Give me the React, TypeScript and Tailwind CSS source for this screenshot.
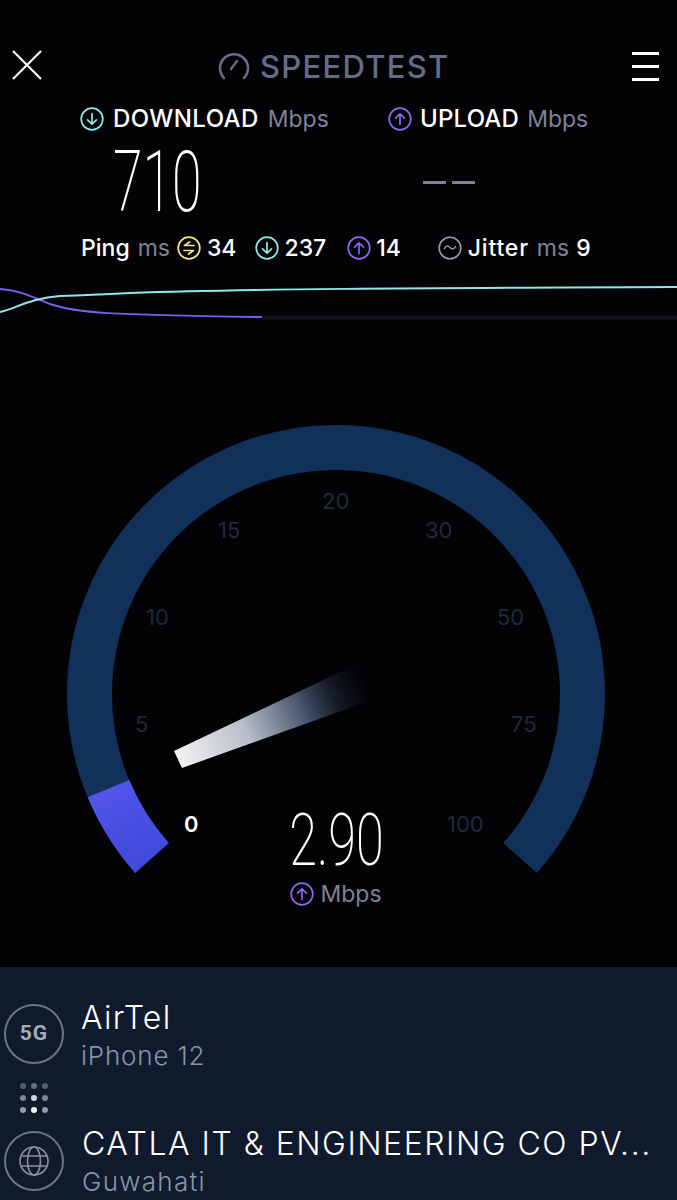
const sans = "font-['Inter','Liberation_Sans',sans-serif]";

const CircleArrow = ({ up, color, size = 24 }: { up?: boolean; color: string; size?: number }) => (
    <svg width={size} height={size} viewBox="0 0 24 24" fill="none" stroke={color} strokeWidth="1.7" strokeLinecap="round" strokeLinejoin="round" className="shrink-0">
        <circle cx="12" cy="12" r="10.8" />
        {up ? <path d="M12 17.5V6.8M7.5 11.2 12 6.8l4.5 4.4" /> : <path d="M12 6.5v10.7M7.5 12.8l4.5 4.4 4.5-4.4" />}
    </svg>
);

const PingIcon = () => (
    <svg width="24" height="24" viewBox="0 0 24 24" fill="none" stroke="#f2e68a" strokeWidth="1.7" strokeLinecap="round" strokeLinejoin="round" className="shrink-0">
        <circle cx="12" cy="12" r="10.8" />
        <path d="M17 9.5H7.5L12.5 6M7 14.5h9.5L11.5 18" />
    </svg>
);

const JitterIcon = () => (
    <svg width="24" height="24" viewBox="0 0 24 24" fill="none" stroke="#9a9fae" strokeWidth="1.5" strokeLinecap="round" className="shrink-0">
        <circle cx="12" cy="12" r="10.8" />
        <path d="M6.5 12.5c1.5-3 3.5-3 5.5-1s4 2 5.5-1" />
    </svg>
);

const Gauge = () => (
    <svg width="677" height="637" viewBox="0 330 677 637" fill="none" className="block">
        <defs>
            <linearGradient id="needle" gradientUnits="userSpaceOnUse" x1="178" y1="760" x2="370" y2="681">
                <stop offset="0" stopColor="#f2f2f2" />
                <stop offset="0.35" stopColor="#b9bfca" />
                <stop offset="0.65" stopColor="#46546c" />
                <stop offset="1" stopColor="#040a14" stopOpacity="0" />
            </linearGradient>
            <linearGradient id="fill" gradientUnits="userSpaceOnUse" x1="110" y1="790" x2="150" y2="870">
                <stop offset="0" stopColor="#5254ea" />
                <stop offset="1" stopColor="#3f47d9" />
            </linearGradient>
        </defs>
        <path d="M152 858A246.5 246.5 0 1 1 520 858" stroke="#11305a" strokeWidth="45" />
        <path d="M152 858A246.5 246.5 0 0 1 108.5 788.7" stroke="url(#fill)" strokeWidth="45" />
        <path d="M174 751 182 768 372 700 357 664Z" fill="url(#needle)" />
    </svg>
);

const labels = [
    { t: '20', c: 'left-[322px] top-[158px]' },
    { t: '15', c: 'left-[218px] top-[187px]' },
    { t: '30', c: 'left-[425px] top-[187px]' },
    { t: '10', c: 'left-[146px] top-[274px]' },
    { t: '50', c: 'left-[497px] top-[274px]' },
    { t: '5', c: 'left-[135px] top-[381px]' },
    { t: '75', c: 'left-[511px] top-[381px]' },
    { t: '100', c: 'left-[447px] top-[481px]' },
];

export default function App() {
    return (
        <div className={`w-[677px] h-[1200px] overflow-hidden bg-[#030305] text-white ${sans}`}>
            <div className="h-[330px]">
                <div className="flex items-center justify-between h-[132px] px-[12px] relative">
                    <svg width="30" height="30" viewBox="0 0 30 30" stroke="#fff" strokeWidth="2.2" className="-translate-y-[1px]">
                        <path d="M1 1 29 29M29 1 1 29" />
                    </svg>
                    <div className="flex items-center gap-[10px] text-[#646c88] ml-[176px] mr-auto">
                        <svg width="32" height="30" viewBox="0 0 32 30" fill="none" stroke="#646c88" strokeWidth="2.6" strokeLinecap="round">
                            <path d="M6 27A14 14 0 1 1 26 27" />
                            <path d="M13 18 19 10" strokeWidth="2.4" />
                        </svg>
                        <span className="text-[31px] font-medium tracking-[1.3px] leading-none">SPEEDTEST</span>
                    </div>
                    <div className="flex flex-col gap-[10px] w-[27px] mr-[6px]">
                        <div className="h-[3px] bg-white" />
                        <div className="h-[3px] bg-white" />
                        <div className="h-[3px] bg-white" />
                    </div>
                </div>
                <div className="-mt-[25px] flex items-center h-[24px] text-[24px] font-medium leading-none">
                    <div className="ml-[80px] w-[308px] flex items-center gap-[9px]">
                        <CircleArrow color="#8fe8e8" />
                        <span className="tracking-[0.4px]">DOWNLOAD</span>
                        <span className="text-[#7d8299] font-normal text-[23px]">Mbps</span>
                    </div>
                    <div className="flex items-center gap-[8px]">
                        <CircleArrow up color="#8b66ee" />
                        <span className="tracking-[0.2px]">UPLOAD</span>
                        <span className="text-[#7d8299] font-normal text-[23px]">Mbps</span>
                    </div>
                </div>
                <div className="flex items-center h-[70px] mt-[16px]">
                    <span className="ml-[113px] w-[310px] text-[85px] leading-none font-['Roboto',sans-serif] font-extralight scale-x-[.63] origin-left">710</span>
                    <div className="flex gap-[6px] mt-[1px]">
                        <div className="w-[23px] h-[3px] bg-[#7f8298]" />
                        <div className="w-[23px] h-[3px] bg-[#7f8298]" />
                    </div>
                </div>
                <div className="flex items-center h-[24px] mt-[19px] text-[23px] font-medium leading-none">
                    <span className="ml-[81px]">Ping</span>
                    <span className="ml-[8px] text-[#7d8299] font-normal">ms</span>
                    <span className="ml-[7px]"><PingIcon /></span>
                    <span className="ml-[6px]">34</span>
                    <span className="ml-[19px]"><CircleArrow color="#8fe8e8" /></span>
                    <span className="ml-[5px]">237</span>
                    <span className="ml-[21px]"><CircleArrow up color="#8b66ee" /></span>
                    <span className="ml-[5px]">14</span>
                    <span className="ml-[37px]"><JitterIcon /></span>
                    <span className="ml-[6px] tracking-[0.8px]">Jitter</span>
                    <span className="ml-[8px] text-[#7d8299] font-normal">ms</span>
                    <span className="ml-[7px]">9</span>
                </div>
                <svg width="677" height="60" viewBox="0 270 677 60" fill="none" className="block mt-[10px]">
                    <path d="M262 317.5H677" stroke="#111317" strokeWidth="4" />
                    <path d="M0 289C20 290 32 297 50 304C75 313 110 315 262 317" stroke="#7b5de8" strokeWidth="2" />
                    <path d="M0 312C15 309 30 298 60 296C90 295 110 294 130 293C250 289 400 288 677 287" stroke="#8fe8e8" strokeWidth="2" />
                </svg>
            </div>

            <div className="relative h-[637px]">
                <Gauge />
                {labels.map((l) => (
                    <span key={l.t} className={`absolute ${l.c} text-[22px] leading-[26px] text-[#1e2a3b]`}>{l.t}</span>
                ))}
                <span className="absolute left-[184px] top-[481px] text-[22px] leading-[26px] font-semibold text-white">0</span>
                <div className="absolute left-[270px] top-[481px] w-[132px] flex flex-col items-center">
                    <span className="text-[72px] leading-[60px] font-['Roboto',sans-serif] font-extralight scale-x-[.7]">2.90</span>
                    <div className="flex items-center gap-[6px] mt-[11px] text-[23px] leading-none text-[#7d8299]">
                        <CircleArrow up color="#8b66ee" />
                        <span>Mbps</span>
                    </div>
                </div>
            </div>

            <div className="h-[233px] bg-[#0f1a2d] pl-[4px]">
                <div className="flex items-start gap-[17px] pt-[32px]">
                    <div className="w-[60px] h-[60px] mt-[5px] rounded-full border-2 border-[#6e7485] flex items-center justify-center font-['Roboto',sans-serif] text-[21px] font-bold text-[#a6abb8] tracking-[1px]">5G</div>
                    <div className="flex flex-col">
                        <span className="text-[32px] leading-[38px] font-light tracking-[1.3px]">AirTel</span>
                        <span className="text-[26px] leading-[38px] font-light tracking-[0.8px] text-[#8a94a8]">iPhone 12</span>
                    </div>
                </div>
                <div className="ml-[16px] mt-[8px] grid grid-cols-3 w-[28px] gap-y-[6px] gap-x-[5px]">
                    {['#555d72', '#666e82', '#555d72', '#7d8496', '#d0d3dc', '#7d8496', '#9599a8', '#f4f4f6', '#9599a8'].map((c, i) => (
                        <div key={i} className="w-[6px] h-[6px] rounded-full" style={{ backgroundColor: c }} />
                    ))}
                </div>
                <div className="flex items-start gap-[18px] mt-[18px]">
                    <div className="w-[60px] h-[60px] shrink-0 rounded-full border-2 border-[#6e7485] flex items-center justify-center">
                        <svg width="32" height="32" viewBox="0 0 32 32" fill="none" stroke="#8a90a0" strokeWidth="1.6">
                            <circle cx="16" cy="16" r="14" />
                            <ellipse cx="16" cy="16" rx="6.5" ry="14" />
                            <path d="M3.5 11h25M3.5 21h25" />
                        </svg>
                    </div>
                    <div className="flex flex-col min-w-0 -mt-[6px]">
                        <span className="text-[32px] leading-[38px] font-light tracking-[1.5px] whitespace-nowrap">CATLA IT &amp; ENGINEERING CO PV...</span>
                        <span className="text-[26px] leading-[38px] font-light tracking-[1.3px] text-[#8a94a8]">Guwahati</span>
                    </div>
                </div>
            </div>
        </div>
    );
}
